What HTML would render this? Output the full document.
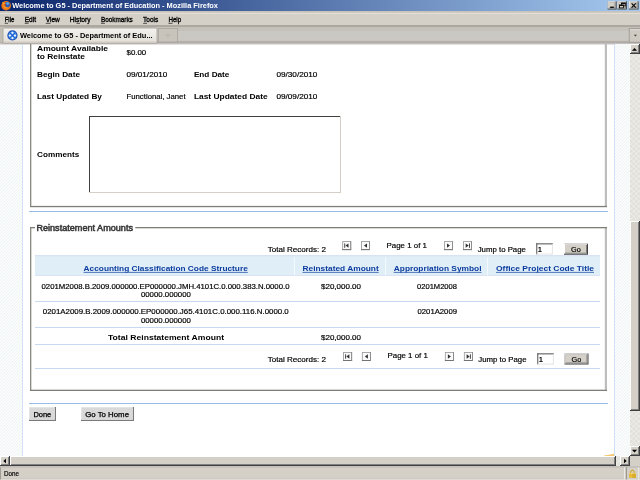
<!DOCTYPE html>
<html><head><meta charset="utf-8"><style>
html,body{margin:0;padding:0;width:640px;height:480px;overflow:hidden;background:#fff;font-family:"Liberation Sans", sans-serif;}
svg{display:block;will-change:transform}
</style></head><body><svg width="640" height="480" viewBox="0 0 640 480" font-family='"Liberation Sans", sans-serif' shape-rendering="auto"><defs><linearGradient id="tg" x1="0" x2="1" y1="0" y2="0"><stop offset="0" stop-color="#0A246A"/><stop offset="1" stop-color="#A6CAF0"/></linearGradient><pattern id="stripe" width="2.2" height="4" patternUnits="userSpaceOnUse" patternTransform="rotate(45)"><rect width="2.2" height="4" fill="#FFFFFF"/><rect width="0.95" height="4" fill="#EDF2F3"/></pattern><pattern id="dither" width="5" height="5" patternUnits="userSpaceOnUse"><rect width="5" height="5" fill="#ECEAE5"/><rect width="2.5" height="2.5" fill="#E2E0DA"/><rect x="2.5" y="2.5" width="2.5" height="2.5" fill="#E2E0DA"/></pattern><linearGradient id="tabg" x1="0" x2="0" y1="0" y2="1"><stop offset="0" stop-color="#F4F2EE"/><stop offset="1" stop-color="#E2DFD8"/></linearGradient></defs>
<rect x="0" y="0" width="640" height="480" fill="#FFFFFF" />
<rect x="0" y="0" width="640" height="11" fill="url(#tg)" />
<circle cx="6.1" cy="5.7" r="4.8" fill="#EC7414"/><circle cx="7.2" cy="4.7" r="2.7" fill="#2A5CB8"/><circle cx="7.6" cy="3.5" r="1.3" fill="#58B4EC"/><path d="M2.2 2 L3.2 4.2 Q2.8 6.5 4.5 8 Q6.8 9.2 8.6 7.6 Q6 7.8 5 6 Q4.6 4.6 5.6 3.6 Q4 2.4 2.2 2Z" fill="#F49828"/><path d="M9.8 3.2 Q11 6 9.6 8.4 Q10.6 6 9.8 3.2Z" fill="#F8C040"/><circle cx="5.2" cy="5" r="0.9" fill="#C83A10"/>
<text x="12.2" y="8" font-size="7.2" font-weight="bold" fill="#FFFFFF" textLength="205.8" lengthAdjust="spacingAndGlyphs" >Welcome to G5 - Department of Education - Mozilla Firefox</text>
<rect x="607.6" y="1.3" width="9" height="8.2" fill="#404040" />
<rect x="607.6" y="1.3" width="8" height="7.199999999999999" fill="#FFFFFF" />
<rect x="608.6" y="2.3" width="7" height="6.199999999999999" fill="#808080" />
<rect x="608.6" y="2.3" width="6" height="5.199999999999999" fill="#D4D0C8" />
<rect x="617.3" y="1.3" width="9.6" height="8.2" fill="#404040" />
<rect x="617.3" y="1.3" width="8.6" height="7.199999999999999" fill="#FFFFFF" />
<rect x="618.3" y="2.3" width="7.6" height="6.199999999999999" fill="#808080" />
<rect x="618.3" y="2.3" width="6.6" height="5.199999999999999" fill="#D4D0C8" />
<rect x="628.8" y="1.3" width="9.8" height="8.2" fill="#404040" />
<rect x="628.8" y="1.3" width="8.8" height="7.199999999999999" fill="#FFFFFF" />
<rect x="629.8" y="2.3" width="7.800000000000001" height="6.199999999999999" fill="#808080" />
<rect x="629.8" y="2.3" width="6.800000000000001" height="5.199999999999999" fill="#D4D0C8" />
<rect x="610.2" y="6.6" width="3.6" height="1.3" fill="#000" />
<rect x="621.4" y="3.1" width="3.8" height="2.8" fill="none" stroke="#000" stroke-width="0.8"/><rect x="621.0" y="2.7" width="4.6" height="1.1" fill="#000"/>
<rect x="619.6" y="5.1" width="3.8" height="2.8" fill="#D4D0C8" stroke="#000" stroke-width="0.8"/><rect x="619.2" y="4.7" width="4.6" height="1.1" fill="#000"/>
<path d="M631.6 3.3 L635.8 7.6 M635.8 3.3 L631.6 7.6" stroke="#000" stroke-width="1.2"/>
<rect x="0" y="11" width="640" height="16" fill="#D4D0C8" />
<rect x="0" y="11" width="640" height="1.5" fill="#C8C4BC" />
<rect x="0" y="13.2" width="640" height="0.8" fill="#E6E2DA" />
<rect x="0" y="25" width="640" height="2" fill="#ACA8A0" />
<text x="4.7" y="22.2" font-size="7.2" font-weight="normal" fill="#000" textLength="9.7" lengthAdjust="spacingAndGlyphs"  stroke="#000" stroke-width="0.32">File</text>
<text x="24.7" y="22.2" font-size="7.2" font-weight="normal" fill="#000" textLength="11.3" lengthAdjust="spacingAndGlyphs"  stroke="#000" stroke-width="0.32">Edit</text>
<text x="45.8" y="22.2" font-size="7.2" font-weight="normal" fill="#000" textLength="14.0" lengthAdjust="spacingAndGlyphs"  stroke="#000" stroke-width="0.32">View</text>
<text x="69.8" y="22.2" font-size="7.2" font-weight="normal" fill="#000" textLength="20.799999999999997" lengthAdjust="spacingAndGlyphs"  stroke="#000" stroke-width="0.32">History</text>
<text x="100.9" y="22.2" font-size="7.2" font-weight="normal" fill="#000" textLength="31.900000000000006" lengthAdjust="spacingAndGlyphs"  stroke="#000" stroke-width="0.32">Bookmarks</text>
<text x="143.1" y="22.2" font-size="7.2" font-weight="normal" fill="#000" textLength="15.200000000000017" lengthAdjust="spacingAndGlyphs"  stroke="#000" stroke-width="0.32">Tools</text>
<text x="168.4" y="22.2" font-size="7.2" font-weight="normal" fill="#000" textLength="12.849999999999994" lengthAdjust="spacingAndGlyphs"  stroke="#000" stroke-width="0.32">Help</text>
<rect x="4.7" y="22.9" width="3.3" height="0.7" fill="#202020" />
<rect x="24.7" y="22.9" width="3.8000000000000007" height="0.7" fill="#202020" />
<rect x="45.8" y="22.9" width="4.700000000000003" height="0.7" fill="#202020" />
<rect x="76.5" y="22.9" width="3.5" height="0.7" fill="#202020" />
<rect x="100.9" y="22.9" width="4.099999999999994" height="0.7" fill="#202020" />
<rect x="143.1" y="22.9" width="3.9000000000000057" height="0.7" fill="#202020" />
<rect x="168.4" y="22.9" width="4.099999999999994" height="0.7" fill="#202020" />
<rect x="0" y="27" width="640" height="17" fill="#CAC8C2" />
<rect x="0" y="27" width="640" height="4" fill="#C4C0BA" />
<rect x="0" y="39.6" width="640" height="1.6" fill="#CCC4BC" />
<rect x="0" y="41.4" width="640" height="1.4" fill="#A2A2A0" />
<rect x="0" y="42.8" width="640" height="1.2" fill="#C4BEBC" />
<rect x="0" y="28" width="2.4" height="14.5" fill="#C2BEB6" />
<path d="M3 43 L3 29.5 Q3 28 4.5 28 L155.5 28 Q157 28 157 29.5 L157 43 Z" fill="url(#tabg)" stroke="#A09C94" stroke-width="0.8"/>
<rect x="3.5" y="41.5" width="153" height="1.5" fill="#D2CAC2" />
<circle cx="12.45" cy="35.4" r="5.1" fill="#1A4CB4"/><circle cx="12.45" cy="35.4" r="4.2" fill="#3C86E6"/><path d="M9.6 32.6 L15.3 38.2 M15.3 32.6 L9.6 38.2" stroke="#1E5CD0" stroke-width="1"/><circle cx="12.45" cy="32.8" r="1.15" fill="#EEF2F4"/><circle cx="9.9" cy="35.6" r="1.15" fill="#EEF2F4"/><circle cx="15.0" cy="35.6" r="1.15" fill="#EEF2F4"/><circle cx="12.45" cy="38.1" r="1.15" fill="#EEF2F4"/>
<text x="19.9" y="37.8" font-size="7.2" font-weight="bold" fill="#000" textLength="132.7" lengthAdjust="spacingAndGlyphs" >Welcome to G5 - Department of Edu...</text>
<rect x="158.5" y="28.5" width="19" height="13.5" fill="#C8C4BC" stroke="#A8A49C" stroke-width="0.8"/>
<path d="M168 33 L168 38 M165.5 35.5 L170.5 35.5" stroke="#A8A49C" stroke-width="0.7" stroke-dasharray="1 1"/>
<rect x="629.2" y="28.6" width="12" height="13.6" fill="#CECAC2" stroke="#9E9A94" stroke-width="0.9"/>
<rect x="630" y="29.4" width="10" height="0.8" fill="#E4E0DA" />
<path d="M633.8 34.8 L637 34.8 L635.4 36.6Z" fill="#404040"/>
<rect x="0" y="44" width="630" height="412" fill="#FFFFFF" />
<rect x="0" y="44" width="22" height="412" fill="url(#stripe)" />
<rect x="0" y="44" width="630" height="0.6" fill="#D0CCCA" />
<rect x="615" y="44" width="15" height="412" fill="url(#stripe)" />
<rect x="22" y="44" width="1" height="412" fill="#D2E0F6" />
<rect x="614" y="44" width="1" height="412" fill="#D2E0F6" />
<rect x="30.1" y="44" width="1.2" height="163" fill="#7E7E76" />
<rect x="604.8" y="44" width="2.2" height="162" fill="#BDBDBD" />
<rect x="30" y="205.9" width="577" height="1.3" fill="#7E7E76" />
<text x="37" y="51" font-size="7.3" font-weight="bold" fill="#000" textLength="71.1" lengthAdjust="spacingAndGlyphs" >Amount Available</text>
<text x="37" y="58.8" font-size="7.3" font-weight="bold" fill="#000" textLength="48" lengthAdjust="spacingAndGlyphs" >to Reinstate</text>
<text x="126.5" y="55.25" font-size="7.3" font-weight="normal" fill="#000" textLength="19.75" lengthAdjust="spacingAndGlyphs"  stroke="#000" stroke-width="0.18">$0.00</text>
<text x="37" y="77.2" font-size="7.3" font-weight="bold" fill="#000" textLength="43" lengthAdjust="spacingAndGlyphs" >Begin Date</text>
<text x="126.5" y="76.9" font-size="7.3" font-weight="normal" fill="#000" textLength="40.75" lengthAdjust="spacingAndGlyphs"  stroke="#000" stroke-width="0.18">09/01/2010</text>
<text x="193.9" y="77" font-size="7.3" font-weight="bold" fill="#000" textLength="35.5" lengthAdjust="spacingAndGlyphs" >End Date</text>
<text x="276.4" y="77" font-size="7.3" font-weight="normal" fill="#000" textLength="41.0" lengthAdjust="spacingAndGlyphs"  stroke="#000" stroke-width="0.18">09/30/2010</text>
<text x="37" y="99" font-size="7.3" font-weight="bold" fill="#000" textLength="64.9" lengthAdjust="spacingAndGlyphs" >Last Updated By</text>
<text x="126.5" y="98.8" font-size="7.3" font-weight="normal" fill="#000" textLength="59.099999999999994" lengthAdjust="spacingAndGlyphs"  stroke="#000" stroke-width="0.18">Functional, Janet</text>
<text x="193.9" y="99" font-size="7.3" font-weight="bold" fill="#000" textLength="73.79999999999998" lengthAdjust="spacingAndGlyphs" >Last Updated Date</text>
<text x="276.4" y="99" font-size="7.3" font-weight="normal" fill="#000" textLength="41.0" lengthAdjust="spacingAndGlyphs"  stroke="#000" stroke-width="0.18">09/09/2010</text>
<text x="37.1" y="157" font-size="7.3" font-weight="bold" fill="#000" textLength="42.1" lengthAdjust="spacingAndGlyphs" >Comments</text>
<rect x="89" y="116" width="252" height="77" fill="#D4D0C8" />
<rect x="89" y="116" width="251" height="76" fill="#404040" />
<rect x="90" y="117" width="250" height="75" fill="#FFFFFF" />
<rect x="29" y="211" width="579" height="1" fill="#96BCE8" />
<rect x="30.1" y="227" width="1.2" height="164" fill="#7E7E76" />
<rect x="604.8" y="228" width="2.2" height="162" fill="#BDBDBD" />
<rect x="30" y="389.7" width="577" height="1.3" fill="#7E7E76" />
<rect x="30" y="227" width="5" height="1.3" fill="#7E7E76" />
<rect x="135.3" y="227" width="471.7" height="1.3" fill="#7E7E76" />
<text x="36.4" y="231" font-size="8.8" font-weight="normal" fill="#3A3A3A" textLength="96.6" lengthAdjust="spacingAndGlyphs"  stroke="#3A3A3A" stroke-width="0.55">Reinstatement Amounts</text>
<text x="267.8" y="252" font-size="7.3" font-weight="normal" fill="#000" textLength="58.19999999999999" lengthAdjust="spacingAndGlyphs"  stroke="#000" stroke-width="0.18">Total Records: 2</text>
<rect x="342.65" y="241.54999999999998" width="8.1" height="8.1" fill="#FAFAFA" stroke="#A0A0A0" stroke-width="0.9"/>
<rect x="342.2" y="249.2" width="9" height="0.9" fill="#6E6E6E" />
<rect x="350.3" y="241.1" width="0.9" height="9" fill="#8A8A8A" />
<path d="M348.5 243.4 L345.5 245.6 L348.5 247.79999999999998Z" fill="#303030"/><rect x="344.3" y="243.4" width="0.9" height="4.4" fill="#303030"/>
<rect x="361.45" y="241.54999999999998" width="8.1" height="8.1" fill="#FAFAFA" stroke="#A0A0A0" stroke-width="0.9"/>
<rect x="361" y="249.2" width="9" height="0.9" fill="#6E6E6E" />
<rect x="369.1" y="241.1" width="0.9" height="9" fill="#8A8A8A" />
<path d="M367.0 243.4 L364.0 245.6 L367.0 247.79999999999998Z" fill="#303030"/>
<text x="386.6" y="248.2" font-size="7.3" font-weight="normal" fill="#000" textLength="40.299999999999955" lengthAdjust="spacingAndGlyphs"  stroke="#000" stroke-width="0.18">Page 1 of 1</text>
<rect x="444.45" y="241.54999999999998" width="8.1" height="8.1" fill="#FAFAFA" stroke="#A0A0A0" stroke-width="0.9"/>
<rect x="444" y="249.2" width="9" height="0.9" fill="#6E6E6E" />
<rect x="452.1" y="241.1" width="0.9" height="9" fill="#8A8A8A" />
<path d="M447.0 243.4 L450.0 245.6 L447.0 247.79999999999998Z" fill="#303030"/>
<rect x="463.45" y="241.54999999999998" width="8.1" height="8.1" fill="#FAFAFA" stroke="#A0A0A0" stroke-width="0.9"/>
<rect x="463" y="249.2" width="9" height="0.9" fill="#6E6E6E" />
<rect x="471.1" y="241.1" width="0.9" height="9" fill="#8A8A8A" />
<path d="M465.7 243.4 L468.7 245.6 L465.7 247.79999999999998Z" fill="#303030"/><rect x="469.0" y="243.4" width="0.9" height="4.4" fill="#303030"/>
<text x="477.7" y="252" font-size="7.3" font-weight="normal" fill="#000" textLength="48.19999999999999" lengthAdjust="spacingAndGlyphs"  stroke="#000" stroke-width="0.18">Jump to Page</text>
<rect x="536.2" y="243.3" width="16.6" height="11.2" fill="#FFFFFF" />
<rect x="536.2" y="243.3" width="16.6" height="1.1" fill="#5E5E5E" />
<rect x="536.2" y="243.3" width="1.1" height="11.2" fill="#5E5E5E" />
<rect x="536.2" y="253.6" width="16.6" height="0.9" fill="#E2E2E2" />
<rect x="551.9000000000001" y="244.3" width="0.9" height="10.2" fill="#E2E2E2" />
<text x="537.8" y="251.7" font-size="7.3" font-weight="bold" fill="#000" textLength="4.2000000000000455" lengthAdjust="spacingAndGlyphs" >1</text>
<rect x="564" y="243.7" width="24" height="11" fill="#404040" />
<rect x="564" y="243.7" width="23" height="10" fill="#FFFFFF" />
<rect x="565" y="244.7" width="22" height="9" fill="#808080" />
<rect x="565" y="244.7" width="21" height="8" fill="#D4D0C8" />
<text x="571" y="251.79999999999998" font-size="7.3" font-weight="normal" fill="#000" textLength="9.700000000000045" lengthAdjust="spacingAndGlyphs"  stroke="#000" stroke-width="0.18">Go</text>
<rect x="35" y="255" width="565" height="21" fill="#DFEEF7" />
<rect x="35" y="255" width="565" height="1.2" fill="#D9E1F4" />
<rect x="35" y="275" width="565" height="1" fill="#DCE3F4" />
<rect x="294" y="257.5" width="1" height="18" fill="#F4F9FD" />
<rect x="385" y="257.5" width="1" height="18" fill="#F4F9FD" />
<rect x="487" y="257.5" width="1" height="18" fill="#F4F9FD" />
<text x="83.6" y="271.25" font-size="7.3" font-weight="bold" fill="#0B3B9E" textLength="164.20000000000002" lengthAdjust="spacingAndGlyphs" >Accounting Classification Code Structure</text>
<rect x="83.6" y="271.9" width="164.20000000000002" height="0.9" fill="#3F66B4" />
<text x="302.5" y="271.25" font-size="7.3" font-weight="bold" fill="#0B3B9E" textLength="76.25" lengthAdjust="spacingAndGlyphs" >Reinstated Amount</text>
<rect x="302.5" y="271.9" width="76.25" height="0.9" fill="#3F66B4" />
<text x="393.75" y="271.25" font-size="7.3" font-weight="bold" fill="#0B3B9E" textLength="87.75" lengthAdjust="spacingAndGlyphs" >Appropriation Symbol</text>
<rect x="393.75" y="271.9" width="87.75" height="0.9" fill="#3F66B4" />
<text x="496" y="271.25" font-size="7.3" font-weight="bold" fill="#0B3B9E" textLength="98" lengthAdjust="spacingAndGlyphs" >Office Project Code Title</text>
<rect x="496" y="271.9" width="98" height="0.9" fill="#3F66B4" />
<text x="41.5" y="288.9" font-size="7.3" font-weight="normal" fill="#000" textLength="248.0" lengthAdjust="spacingAndGlyphs"  stroke="#000" stroke-width="0.18">0201M2008.B.2009.000000.EP000000.JMH.4101C.0.000.383.N.0000.0</text>
<text x="140.9" y="297" font-size="7.3" font-weight="normal" fill="#000" textLength="50.0" lengthAdjust="spacingAndGlyphs"  stroke="#000" stroke-width="0.18">00000.000000</text>
<text x="321" y="288.9" font-size="7.3" font-weight="normal" fill="#000" textLength="40" lengthAdjust="spacingAndGlyphs"  stroke="#000" stroke-width="0.18">$20,000.00</text>
<text x="417" y="288.9" font-size="7.3" font-weight="normal" fill="#000" textLength="40" lengthAdjust="spacingAndGlyphs"  stroke="#000" stroke-width="0.18">0201M2008</text>
<rect x="35" y="301" width="565" height="1" fill="#C6D9F1" />
<text x="42.75" y="314.4" font-size="7.3" font-weight="normal" fill="#000" textLength="246.0" lengthAdjust="spacingAndGlyphs"  stroke="#000" stroke-width="0.18">0201A2009.B.2009.000000.EP000000.J65.4101C.0.000.116.N.0000.0</text>
<text x="140.9" y="322.5" font-size="7.3" font-weight="normal" fill="#000" textLength="50.0" lengthAdjust="spacingAndGlyphs"  stroke="#000" stroke-width="0.18">00000.000000</text>
<text x="417.5" y="314.4" font-size="7.3" font-weight="normal" fill="#000" textLength="39.5" lengthAdjust="spacingAndGlyphs"  stroke="#000" stroke-width="0.18">0201A2009</text>
<rect x="35" y="327" width="565" height="1" fill="#C6D9F1" />
<text x="108" y="340" font-size="7.3" font-weight="bold" fill="#000" textLength="116" lengthAdjust="spacingAndGlyphs" >Total Reinstatement Amount</text>
<text x="321" y="340" font-size="7.3" font-weight="normal" fill="#000" textLength="40" lengthAdjust="spacingAndGlyphs"  stroke="#000" stroke-width="0.18">$20,000.00</text>
<rect x="35" y="344" width="565" height="1" fill="#C6D9F1" />
<text x="267.8" y="362" font-size="7.3" font-weight="normal" fill="#000" textLength="58.19999999999999" lengthAdjust="spacingAndGlyphs"  stroke="#000" stroke-width="0.18">Total Records: 2</text>
<rect x="343.54999999999995" y="352.45" width="8.1" height="8.1" fill="#FAFAFA" stroke="#A0A0A0" stroke-width="0.9"/>
<rect x="343.09999999999997" y="360.1" width="9" height="0.9" fill="#6E6E6E" />
<rect x="351.2" y="352" width="0.9" height="9" fill="#8A8A8A" />
<path d="M349.4 354.3 L346.4 356.5 L349.4 358.7Z" fill="#303030"/><rect x="345.2" y="354.3" width="0.9" height="4.4" fill="#303030"/>
<rect x="362.34999999999997" y="352.45" width="8.1" height="8.1" fill="#FAFAFA" stroke="#A0A0A0" stroke-width="0.9"/>
<rect x="361.9" y="360.1" width="9" height="0.9" fill="#6E6E6E" />
<rect x="370.0" y="352" width="0.9" height="9" fill="#8A8A8A" />
<path d="M367.9 354.3 L364.9 356.5 L367.9 358.7Z" fill="#303030"/>
<text x="387.5" y="358" font-size="7.3" font-weight="normal" fill="#000" textLength="40.299999999999955" lengthAdjust="spacingAndGlyphs"  stroke="#000" stroke-width="0.18">Page 1 of 1</text>
<rect x="445.34999999999997" y="352.45" width="8.1" height="8.1" fill="#FAFAFA" stroke="#A0A0A0" stroke-width="0.9"/>
<rect x="444.9" y="360.1" width="9" height="0.9" fill="#6E6E6E" />
<rect x="453.0" y="352" width="0.9" height="9" fill="#8A8A8A" />
<path d="M447.9 354.3 L450.9 356.5 L447.9 358.7Z" fill="#303030"/>
<rect x="464.34999999999997" y="352.45" width="8.1" height="8.1" fill="#FAFAFA" stroke="#A0A0A0" stroke-width="0.9"/>
<rect x="463.9" y="360.1" width="9" height="0.9" fill="#6E6E6E" />
<rect x="472.0" y="352" width="0.9" height="9" fill="#8A8A8A" />
<path d="M466.59999999999997 354.3 L469.59999999999997 356.5 L466.59999999999997 358.7Z" fill="#303030"/><rect x="469.9" y="354.3" width="0.9" height="4.4" fill="#303030"/>
<text x="478.3" y="361.9" font-size="7.3" font-weight="normal" fill="#000" textLength="48.19999999999999" lengthAdjust="spacingAndGlyphs"  stroke="#000" stroke-width="0.18">Jump to Page</text>
<rect x="537.2" y="353.3" width="16.6" height="11.2" fill="#FFFFFF" />
<rect x="537.2" y="353.3" width="16.6" height="1.1" fill="#5E5E5E" />
<rect x="537.2" y="353.3" width="1.1" height="11.2" fill="#5E5E5E" />
<rect x="537.2" y="363.6" width="16.6" height="0.9" fill="#E2E2E2" />
<rect x="552.9000000000001" y="354.3" width="0.9" height="10.2" fill="#E2E2E2" />
<text x="538.8" y="361.7" font-size="7.3" font-weight="bold" fill="#000" textLength="4.2000000000000455" lengthAdjust="spacingAndGlyphs" >1</text>
<rect x="564.5" y="353.5" width="24" height="11" fill="#404040" />
<rect x="564.5" y="353.5" width="23" height="10" fill="#FFFFFF" />
<rect x="565.5" y="354.5" width="22" height="9" fill="#808080" />
<rect x="565.5" y="354.5" width="21" height="8" fill="#D4D0C8" />
<text x="571.5" y="361.6" font-size="7.3" font-weight="normal" fill="#000" textLength="9.700000000000045" lengthAdjust="spacingAndGlyphs"  stroke="#000" stroke-width="0.18">Go</text>
<rect x="35" y="368" width="565" height="1" fill="#C6D9F1" />
<rect x="29" y="403" width="579" height="1" fill="#96BCE8" />
<rect x="29" y="407" width="27" height="14" fill="#7A7A7A" />
<rect x="29" y="407" width="25.8" height="12.8" fill="#E6E6E6" />
<rect x="29.8" y="407.8" width="25" height="12" fill="#D9D9D9" />
<text x="33.4" y="417" font-size="7.3" font-weight="normal" fill="#000" textLength="17.9" lengthAdjust="spacingAndGlyphs" stroke="#000" stroke-width="0.25">Done</text>
<rect x="81" y="407" width="53" height="14" fill="#7A7A7A" />
<rect x="81" y="407" width="51.8" height="12.8" fill="#E6E6E6" />
<rect x="81.8" y="407.8" width="51" height="12" fill="#D9D9D9" />
<text x="85.2" y="416.8" font-size="7.3" font-weight="normal" fill="#000" textLength="43.8" lengthAdjust="spacingAndGlyphs" stroke="#000" stroke-width="0.25">Go To Home</text>
<rect x="630" y="44" width="10" height="412" fill="url(#dither)" />
<rect x="630" y="44" width="10" height="10" fill="#404040" />
<rect x="630" y="44" width="9" height="9" fill="#FFFFFF" />
<rect x="631" y="45" width="8" height="8" fill="#808080" />
<rect x="631" y="45" width="7" height="7" fill="#D4D0C8" />
<path d="M631.9 50.8 L637.1 50.8 L634.5 48.0Z" fill="#000"/>
<rect x="630" y="221" width="10" height="190" fill="#404040" />
<rect x="630" y="221" width="9" height="189" fill="#FFFFFF" />
<rect x="631" y="222" width="8" height="188" fill="#808080" />
<rect x="631" y="222" width="7" height="187" fill="#D4D0C8" />
<rect x="630" y="446" width="10" height="10" fill="#404040" />
<rect x="630" y="446" width="9" height="9" fill="#FFFFFF" />
<rect x="631" y="447" width="8" height="8" fill="#808080" />
<rect x="631" y="447" width="7" height="7" fill="#D4D0C8" />
<path d="M631.9 449.8 L637.1 449.8 L634.5 452.6Z" fill="#000"/>
<rect x="0" y="456" width="630" height="10" fill="url(#dither)" />
<rect x="0" y="456" width="10" height="10" fill="#404040" />
<rect x="0" y="456" width="9" height="9" fill="#FFFFFF" />
<rect x="1" y="457" width="8" height="8" fill="#808080" />
<rect x="1" y="457" width="7" height="7" fill="#D4D0C8" />
<path d="M6 458.7 L6 463.3 L3.3 461Z" fill="#000"/>
<rect x="10" y="456" width="606" height="10" fill="#404040" />
<rect x="10" y="456" width="605" height="9" fill="#FFFFFF" />
<rect x="11" y="457" width="604" height="8" fill="#808080" />
<rect x="11" y="457" width="603" height="7" fill="#D4D0C8" />
<rect x="620" y="456" width="10" height="10" fill="#404040" />
<rect x="620" y="456" width="9" height="9" fill="#FFFFFF" />
<rect x="621" y="457" width="8" height="8" fill="#808080" />
<rect x="621" y="457" width="7" height="7" fill="#D4D0C8" />
<path d="M624 458.7 L624 463.3 L626.7 461Z" fill="#000"/>
<rect x="630" y="456" width="10" height="10" fill="#D4D0C8" />
<rect x="0" y="466" width="640" height="14" fill="#D4D0C8" />
<rect x="0" y="466" width="640" height="1.8" fill="#C6C0BC" />
<rect x="0" y="478.3" width="640" height="0.9" fill="#CEC6C2" />
<rect x="0" y="479.2" width="640" height="0.8" fill="#E2DED8" />
<rect x="0" y="467.5" width="0.9" height="12" fill="#9A968E" />
<rect x="624.2" y="467.5" width="0.9" height="12" fill="#F2F0EC" />
<rect x="625.9" y="467.5" width="0.9" height="12" fill="#8E8A84" />
<rect x="638.3" y="467.5" width="0.9" height="12" fill="#F2F0EC" />
<text x="4" y="476" font-size="7.2" font-weight="normal" fill="#000" textLength="15" lengthAdjust="spacingAndGlyphs"  stroke="#000" stroke-width="0.18">Done</text>
<path d="M630.6 473.4 L630.6 471.6 Q632.4 468.6 634.2 471.6 L634.2 473.4" fill="none" stroke="#D0A830" stroke-width="1.1"/><rect x="629" y="473.2" width="6.8" height="4.6" fill="#E6BC38"/><rect x="632.4" y="473.2" width="3.4" height="4.6" fill="#D8AA28"/><rect x="629" y="473.2" width="6.8" height="0.8" fill="#F2D070"/>
<path d="M604 456 L614 456 L614 453.8 Q609 455 604 455.6Z" fill="#F2B848" opacity="0.8"/></svg></body></html>
